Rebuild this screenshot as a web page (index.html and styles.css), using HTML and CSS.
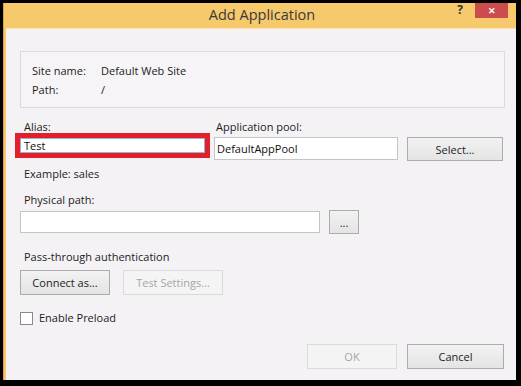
FILE: index.html
```html
<!DOCTYPE html>
<html lang="en">
<head>
    <meta charset="UTF-8">
    <title>Add Application</title>
    <link rel="stylesheet" href="styles.css">
</head>
<body>
    <div class="dialog-window">
        <div class="title-bar">
            <span></span>
            <span class="title-text">Add Application</span>
            <div class="caption-buttons">
                <span class="help-button">?</span>
                <span class="close-button">&#x2715;</span>
            </div>
        </div>
        <div class="client-area">
            <div class="site-box">
                <div class="site-row">
                    <span class="site-label">Site name:</span>
                    <span>Default Web Site</span>
                </div>
                <div class="site-row">
                    <span class="site-label">Path:</span>
                    <span>/</span>
                </div>
            </div>

            <div class="alias-grid">
                <label class="field-label">Alias:</label>
                <label class="field-label">Application pool:</label>
                <span></span>
                <div class="text-field alias-field">Test</div>
                <div class="text-field pool-field">DefaultAppPool</div>
                <button class="win-button select-button">Select...</button>
            </div>
            <div class="hint-text">Example: sales</div>

            <label class="field-label path-label">Physical path:</label>
            <div class="path-row">
                <div class="text-field path-field"></div>
                <button class="win-button browse-button">...</button>
            </div>

            <div class="field-label auth-label">Pass-through authentication</div>
            <div class="auth-row">
                <button class="win-button connect-button">Connect as...</button>
                <button class="win-button test-button" disabled>Test Settings...</button>
            </div>

            <div class="check-row">
                <span class="check-box"></span>
                <span>Enable Preload</span>
            </div>

            <div class="footer-row">
                <button class="win-button ok-button" disabled>OK</button>
                <button class="win-button cancel-button">Cancel</button>
            </div>
        </div>
    </div>
</body>
</html>
```

FILE: styles.css
```css
body {
    background-color: #000000;
    margin: 0;
    padding: 3px 0 0 3px;
    overflow: hidden;
    font-family: "Open Sans", "Noto Sans", sans-serif;
    font-size: 11px;
    color: #1c1c1c;
}

.dialog-window {
    width: 513px;
    height: 377px;
    background: #f6c96c;
    border-left: 1px solid #d9a34a;
    box-sizing: border-box;
    display: flex;
    flex-direction: column;
}

.title-bar {
    height: 25px;
    display: grid;
    grid-template-columns: 1fr auto 1fr;
    align-items: start;
    padding-right: 8px;
}

.title-text {
    font-size: 14.5px;
    line-height: 20px;
    padding-top: 2px;
    padding-left: 12px;
    color: #3a3a3a;
}

.caption-buttons {
    display: flex;
    justify-content: flex-end;
    align-items: flex-start;
}

.help-button {
    font-weight: bold;
    font-size: 12px;
    line-height: 14px;
    color: #333;
    margin-right: 12px;
}

.close-button {
    width: 33px;
    height: 15px;
    background: #cc4b4d;
    color: #fff;
    font-size: 9px;
    font-weight: bold;
    line-height: 15px;
    text-align: center;
}

.client-area {
    flex: 1;
    margin-left: 2px;
    background: #f5f2f5;
    border-top: 1px solid #f9e2ad;
    padding: 22px 11px 0 14px;
}

.site-box {
    border: 1px solid #dcdbdc;
    background: #f6f4f6;
    padding: 9px 12px 8px 11px;
}

.site-row {
    display: flex;
    line-height: 19px;
}

.site-label {
    width: 69px;
}

.field-label {
    display: block;
    line-height: 16px;
    padding-left: 4px;
}

.alias-grid {
    display: grid;
    grid-template-columns: 185px 184px 96px;
    column-gap: 9px;
    row-gap: 2px;
    margin-top: 11px;
}

.alias-grid .field-label:nth-child(2) {
    padding-left: 2px;
}

.text-field {
    background: #fff;
    border: 1px solid #c4c4c7;
    box-sizing: border-box;
    height: 23px;
    line-height: 21px;
    padding-left: 2px;
    color: #111;
}

.alias-field {
    height: 15px;
    line-height: 13px;
    margin-top: 1px;
    border-color: #8fb5d6;
    outline: 5px solid #e21f2b;
    padding-left: 3px;
}

.win-button {
    font-family: inherit;
    font-size: 11px;
    color: #1c1c1c;
    background: linear-gradient(#f2f2f2, #e4e4e4);
    border: 1px solid #acacac;
    height: 25px;
    padding: 0;
    margin: 0;
}

.win-button:disabled {
    background: #f4f4f4;
    border-color: #dadada;
    color: #a6a6a6;
}

.select-button {
    height: 24px;
}

.hint-text {
    line-height: 16px;
    margin-top: 5px;
    padding-left: 4px;
}

.path-label {
    margin-top: 10px;
}

.path-row {
    display: flex;
    align-items: center;
    gap: 9px;
    margin-top: 2px;
}

.path-field {
    width: 300px;
    height: 22px;
}

.browse-button {
    width: 30px;
    height: 24px;
}

.auth-label {
    margin-top: 15px;
}

.auth-row {
    display: flex;
    gap: 13px;
    margin-top: 5px;
}

.connect-button {
    width: 90px;
}

.test-button {
    width: 100px;
}

.check-row {
    display: flex;
    align-items: center;
    gap: 6px;
    line-height: 16px;
    margin-top: 15px;
}

.check-box {
    width: 13px;
    height: 13px;
    box-sizing: border-box;
    border: 1px solid #8a8a8a;
    background: #fff;
}

.footer-row {
    display: flex;
    justify-content: flex-end;
    gap: 10px;
    margin-top: 18px;
    margin-right: 1px;
}

.ok-button {
    width: 90px;
}

.cancel-button {
    width: 97px;
}
```
